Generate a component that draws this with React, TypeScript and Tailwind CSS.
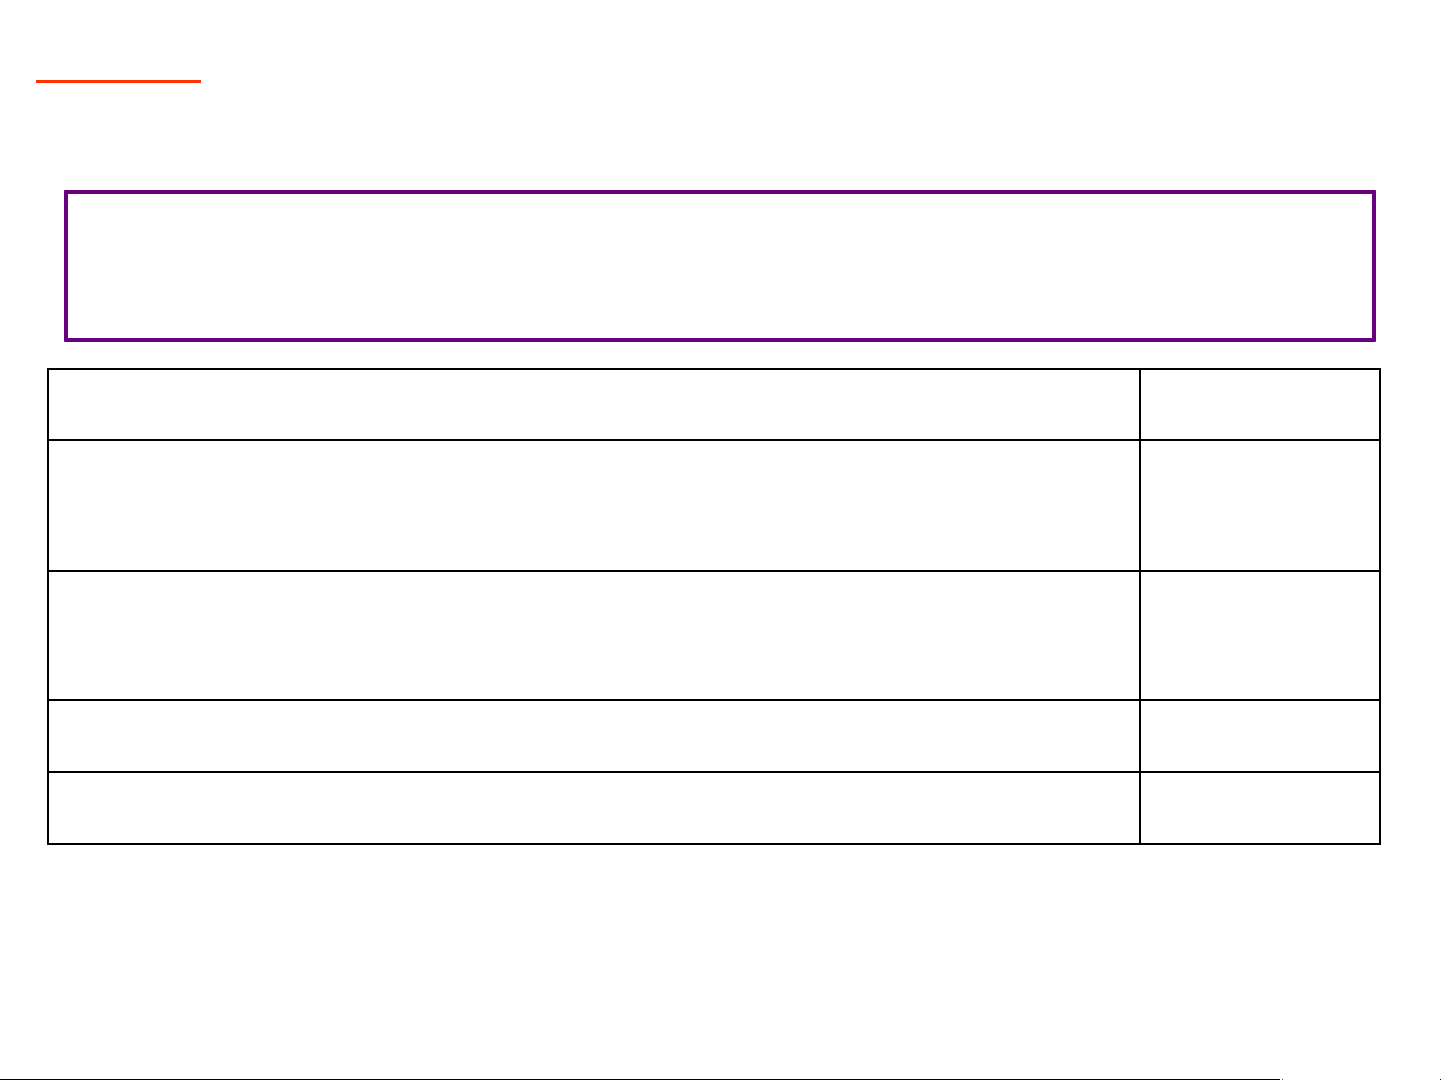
export default function App() {
  // row heights including the 2px divider above each row after the first
  const rows = [69, 131, 129, 72, 72];

  return (
    <div className="relative w-[1441px] h-[1081px] bg-white overflow-hidden font-['Liberation_Sans',sans-serif]">
      {/* title underline */}
      <div className="ml-[36px] pt-[80px]">
        <div className="w-[165px] h-[3px] bg-[#ff3300]"></div>
      </div>

      {/* purple callout box */}
      <div className="ml-[64px] mt-[107px] w-[1312px] h-[152px] border-4 border-[#690080] rounded-[1px]"></div>

      {/* table */}
      <div className="ml-[47px] mt-[26px] w-[1334px] border-2 border-black">
        {rows.map((h, i) => (
          <div
            key={i}
            className={`flex ${i > 0 ? "border-t-2 border-black" : ""}`}
            style={{ height: h }}
          >
            <div className="w-[1090px]"></div>
            <div className="flex-1 border-l-2 border-black"></div>
          </div>
        ))}
      </div>

      {/* slide bottom edge */}
      <div className="mt-[234px] flex items-center h-[1px]">
        <div className="w-[1280px] h-[1px] bg-black"></div>
        <div className="ml-[2px] w-[1px] h-[1px] bg-[#3344ff]"></div>
        <div className="ml-auto w-[1px] h-[1px] bg-black"></div>
      </div>
    </div>
  );
}
